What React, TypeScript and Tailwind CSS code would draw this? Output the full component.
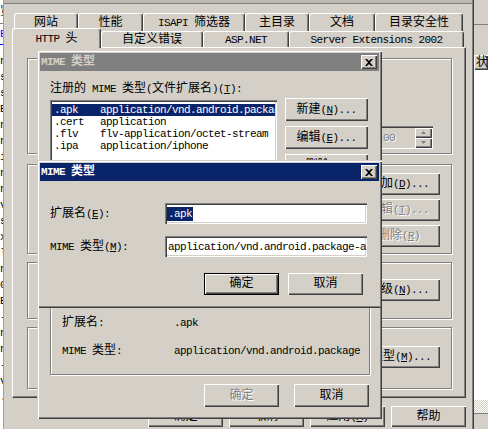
import type { ReactNode } from "react";

// Windows classic 3D edges
const raised = "shadow-[inset_1px_1px_0_#fff,inset_-1px_-1px_0_#404040,inset_-2px_-2px_0_#808080]";
const sunken = "shadow-[inset_1px_1px_0_#808080,inset_2px_2px_0_#404040,inset_-1px_-1px_0_#fff,inset_-2px_-2px_0_#d4d0c8]";
const frame = "shadow-[inset_1px_1px_0_#d4d0c8,inset_2px_2px_0_#fff,inset_-1px_-1px_0_#404040,inset_-2px_-2px_0_#808080]";
const etched = "border border-[#808080] shadow-[inset_1px_1px_0_#fff,1px_1px_0_#fff]";
const grayText = "text-[#808080] [text-shadow:1px_1px_0_#fff]";

const CJK = /([\u3000-\u9fff\uff00-\uffef]+)/;

// latin runs keep the narrow mono cell, han runs get a full 12px cell
function Txt({ s }: { s: string }) {
  return (
    <span className="whitespace-pre">
      {s.split(CJK).map((part, i) =>
        i % 2 === 1 ? (
          <span key={i} className="text-[12px] tracking-normal">
            {part}
          </span>
        ) : (
          part
        )
      )}
    </span>
  );
}

function Label({ text }: { text: string }) {
  const i = text.indexOf("&");
  if (i < 0) return <Txt s={text} />;
  return (
    <span className="whitespace-pre">
      <Txt s={text.slice(0, i)} />
      <span className="underline underline-offset-[1px]">{text[i + 1]}</span>
      <Txt s={text.slice(i + 2)} />
    </span>
  );
}

function Btn({
  children,
  className = "",
  disabled = false,
  primary = false,
}: {
  children: ReactNode;
  className?: string;
  disabled?: boolean;
  primary?: boolean;
}) {
  return (
    <div
      className={`shrink-0 flex items-center justify-center whitespace-nowrap bg-[#d4d0c8] ${raised} ${
        primary ? "border border-black" : ""
      } ${disabled ? grayText : ""} ${className}`}
    >
      {children}
    </div>
  );
}

function CloseGlyph() {
  return (
    <svg width="8" height="7" viewBox="0 0 8 7">
      <path d="M0 0h2l2 2 2-2h2L5 3.5 8 7H6L4 5 2 7H0l3-3.5z" fill="#000" />
    </svg>
  );
}

function TitleBar({ active }: { active: boolean }) {
  return (
    <div
      className={`h-[18px] shrink-0 flex items-center pl-[1px] pr-[2px] ${
        active ? "bg-[#0a246a] text-white" : "bg-[#808080] text-[#d4d0c8]"
      }`}
    >
      <span className="flex-1 font-bold">
        <Txt s="MIME 类型" />
      </span>
      <div className={`w-[16px] h-[14px] flex items-center justify-center bg-[#d4d0c8] ${raised}`}>
        <CloseGlyph />
      </div>
    </div>
  );
}

const mimeRows = [
  { ext: ".apk", type: "application/vnd.android.package-archive", sel: true },
  { ext: ".cert", type: "application", sel: false },
  { ext: ".flv", type: "flv-application/octet-stream", sel: false },
  { ext: ".ipa", type: "application/iphone", sel: false },
];

const leftRows = ["n", "s", "s", "E", "n", "n", "i", "n", "n", "v", "s", "x", "l", "n", "0", "E", "-", "n", "n", "-", "v", "."];

const tabsBack = [
  { label: "网站", w: "w-[64px]" },
  { label: "性能", w: "w-[65px]" },
  { label: "ISAPI 筛选器", w: "w-[102px]" },
  { label: "主目录", w: "w-[64px]" },
  { label: "文档", w: "w-[66px]" },
  { label: "目录安全性", w: "w-[88px]" },
];

const tabsFront = [
  { label: "自定义错误", w: "w-[102px]" },
  { label: "ASP.NET", w: "w-[86px]" },
  { label: "Server Extensions 2002", w: "w-[175px]" },
];

const tab =
  "shrink-0 flex items-center justify-center whitespace-nowrap bg-[#d4d0c8] border-t border-l border-r border-white border-r-[#404040] rounded-t-[3px] shadow-[inset_-1px_0_0_#808080]";

function SpinArrow({ up }: { up: boolean }) {
  return (
    <svg width="5" height="3" viewBox="0 0 5 3">
      <path d={up ? "M2.5 0L5 3H0z" : "M0 0h5L2.5 3z"} fill="#808080" />
    </svg>
  );
}

function PropertiesDialog() {
  return (
    <div className="flex-1 min-w-0 flex flex-col pl-[8px] pr-[6px]">
      <div className="h-[4px] -ml-[8px] -mr-[6px] bg-[#bcb8b0] border-b border-[#808080]" />

      {/* back row of tabs */}
      <div className="mt-[9px] h-[18px] flex pl-[2px]">
        {tabsBack.map((t) => (
          <div key={t.label} className={`${tab} ${t.w} h-[18px]`}>
            <Txt s={t.label} />
          </div>
        ))}
      </div>

      {/* front row, HTTP 头 selected */}
      <div className="-mt-[3px] h-[19px] flex items-start">
        <div className={`${tab} relative z-10 w-[89px] h-[20px]`}>
          <Txt s="HTTP 头" />
        </div>
        {tabsFront.map((t) => (
          <div key={t.label} className={`${tab} ${t.w} h-[16px] mt-[3px]`}>
            <Txt s={t.label} />
          </div>
        ))}
      </div>

      <div className="h-[351px] flex flex-col pl-[14px] pr-[13px] bg-[#d4d0c8] border border-white border-r-[#404040] border-b-[#404040] shadow-[inset_-1px_-1px_0_#808080]">
        <div className={`mt-[10px] h-[96px] flex justify-end items-start pt-[67px] pr-[18px] ${etched}`}>
          <div className={`w-[60px] h-[23px] flex items-center pl-[10px] pr-[1px] bg-[#d4d0c8] ${sunken}`}>
            <span className={`flex-1 ${grayText}`}>00</span>
            <div className="flex flex-col">
              <div className={`w-[17px] h-[10px] flex items-center justify-center ${raised}`}>
                <SpinArrow up />
              </div>
              <div className={`w-[17px] h-[10px] flex items-center justify-center ${raised}`}>
                <SpinArrow up={false} />
              </div>
            </div>
          </div>
        </div>

        <div className={`mt-[10px] h-[90px] flex flex-col items-end gap-[4px] pt-[8px] pr-[11px] ${etched}`}>
          <Btn className="w-[82px] h-[22px]">
            <Label text="添加(&D)..." />
          </Btn>
          <Btn className="w-[82px] h-[22px]" disabled>
            <Label text="编辑(&T)..." />
          </Btn>
          <Btn className="w-[82px] h-[22px]" disabled>
            <Label text="删除(&R)" />
          </Btn>
        </div>

        <div className={`mt-[8px] h-[57px] flex flex-col items-end pt-[16px] pr-[11px] ${etched}`}>
          <Btn className="w-[82px] h-[22px]">
            <Label text="分级(&N)..." />
          </Btn>
        </div>

        <div className={`mt-[8px] h-[62px] flex flex-col items-end pt-[18px] pr-[11px] ${etched}`}>
          <Btn className="w-[108px] h-[22px]">
            <Label text="MIME 类型(&M)..." />
          </Btn>
        </div>
      </div>

      <div className="mt-[8px] flex justify-end gap-[6px]">
        <Btn className="w-[75px] h-[21px]">
          <Txt s="确定" />
        </Btn>
        <Btn className="w-[75px] h-[21px]">
          <Txt s="取消" />
        </Btn>
        <Btn className="w-[75px] h-[21px]">
          <Label text="应用(&A)" />
        </Btn>
        <Btn className="w-[75px] h-[21px]">
          <Txt s="帮助" />
        </Btn>
      </div>
    </div>
  );
}

function MimeListDialog() {
  return (
    <div className={`absolute left-[37px] top-[50px] w-[345px] h-[369px] p-[3px] flex flex-col bg-[#d4d0c8] ${frame}`}>
      <TitleBar active={false} />
      <div className="flex-1 flex flex-col pl-[10px] pr-[9px]">
        <div className="mt-[12px] h-[12px] flex items-center whitespace-nowrap">
          <Label text="注册的 MIME 类型(文件扩展名)(&T):" />
        </div>

        <div className="mt-[3px] flex gap-[8px]">
          <div className={`mt-[2px] w-[227px] h-[152px] bg-white pt-[4px] px-[2px] overflow-hidden ${sunken}`}>
            {mimeRows.map((r) => (
              <div
                key={r.ext}
                className={`h-[12px] flex items-center whitespace-nowrap overflow-hidden ${
                  r.sel ? "bg-[#0a246a] text-white" : ""
                }`}
              >
                <span className="w-[48px] shrink-0 pl-[2px]">{r.ext}</span>
                <span>{r.type}</span>
              </div>
            ))}
          </div>
          <div className="flex flex-col gap-[5px]">
            <Btn className="w-[83px] h-[23px]">
              <Label text="新建(&N)..." />
            </Btn>
            <Btn className="w-[83px] h-[23px]">
              <Label text="编辑(&E)..." />
            </Btn>
            <Btn className="w-[83px] h-[23px]">
              <Label text="删除(&R)" />
            </Btn>
          </div>
        </div>

        <div className={`mt-[38px] w-[320px] h-[85px] flex flex-col pt-[26px] pl-[11px] ${etched}`}>
          <div className="h-[12px] flex items-center">
            <span className="w-[112px] shrink-0">
              <Txt s="扩展名:" />
            </span>
            <span>.apk</span>
          </div>
          <div className="mt-[16px] h-[12px] flex items-center">
            <span className="w-[112px] shrink-0">
              <Txt s="MIME 类型:" />
            </span>
            <span className="whitespace-nowrap">application/vnd.android.package</span>
          </div>
        </div>

        <div className="mt-[9px] flex justify-end gap-[15px] pr-[1px]">
          <Btn className="w-[75px] h-[23px]" disabled>
            <Txt s="确定" />
          </Btn>
          <Btn className="w-[75px] h-[23px]">
            <Txt s="取消" />
          </Btn>
        </div>
      </div>
    </div>
  );
}

function MimeEditDialog() {
  return (
    <div className={`absolute left-[37px] top-[160px] w-[345px] h-[148px] p-[3px] flex flex-col bg-[#d4d0c8] ${frame}`}>
      <TitleBar active />
      <div className="flex-1 flex flex-col pl-[10px] pr-[12px]">
        <div className="mt-[22px] h-[21px] flex items-center">
          <span className="w-[115px] shrink-0">
            <Label text="扩展名(&E):" />
          </span>
          <div className={`w-[202px] h-[21px] flex items-center pl-[2px] bg-white ${sunken}`}>
            <span className="h-[14px] px-[1px] flex items-center bg-[#0a246a] text-white">.apk</span>
          </div>
        </div>
        <div className="mt-[12px] h-[21px] flex items-center">
          <span className="w-[115px] shrink-0 whitespace-nowrap">
            <Label text="MIME 类型(&M):" />
          </span>
          <div className={`w-[202px] h-[21px] flex items-center pl-[3px] pr-[2px] overflow-hidden whitespace-nowrap bg-white ${sunken}`}>
            application/vnd.android.package-archive
          </div>
        </div>
        <div className="mt-[16px] flex justify-end gap-[9px] pr-[4px]">
          <Btn className="w-[75px] h-[22px]" primary>
            <Txt s="确定" />
          </Btn>
          <Btn className="w-[75px] h-[22px]">
            <Txt s="取消" />
          </Btn>
        </div>
      </div>
    </div>
  );
}

export default function App() {
  return (
    <div className="relative w-[488px] h-[429px] overflow-hidden bg-[#d4d0c8] text-black font-['Liberation_Mono','Noto_Sans_CJK_SC',monospace] text-[11px] leading-[12px] tracking-[-0.6px]">
      <div className="flex h-full">
        {/* clipped file list on the left */}
        <div className="w-[4px] min-w-[4px] max-w-[4px] shrink-0 flex flex-col overflow-hidden bg-white border-r border-[#a0a0a0]">
          <div className="h-[24px] shrink-0 flex items-center border-b border-[#808080] whitespace-nowrap">
            <span className="text-[12px]">览</span>
          </div>
          <div className="h-[21px] shrink-0 flex items-center border-b border-[#0000ff] text-[#0000ff]">E</div>
          <div className="h-[8px] shrink-0" />
          {leftRows.map((c, i) => (
            <div key={i} className="h-[16px] shrink-0 flex items-center">
              {c}
            </div>
          ))}
        </div>

        <PropertiesDialog />

        {/* list pane on the right */}
        <div className="w-[16px] shrink-0 flex flex-col border-l border-[#808080]">
          <div className="flex-1 flex flex-col border-l border-[#404040]">
            <div className="h-[25px] shrink-0 border-b border-[#808080]" />
            <div className="h-[30px] shrink-0" />
            <div className={`h-[15px] shrink-0 flex items-center pl-[2px] bg-[#d4d0c8] ${raised}`}>
              <Txt s="状" />
            </div>
            <div className="flex-1 bg-white" />
            <div className="h-[13px] shrink-0 [background:repeating-conic-gradient(#d4d0c8_0_25%,#fff_0_50%)_0_0/2px_2px]" />
            <div className="h-[16px] shrink-0 border-t border-[#808080]" />
          </div>
        </div>
      </div>

      <MimeListDialog />
      <MimeEditDialog />
    </div>
  );
}
